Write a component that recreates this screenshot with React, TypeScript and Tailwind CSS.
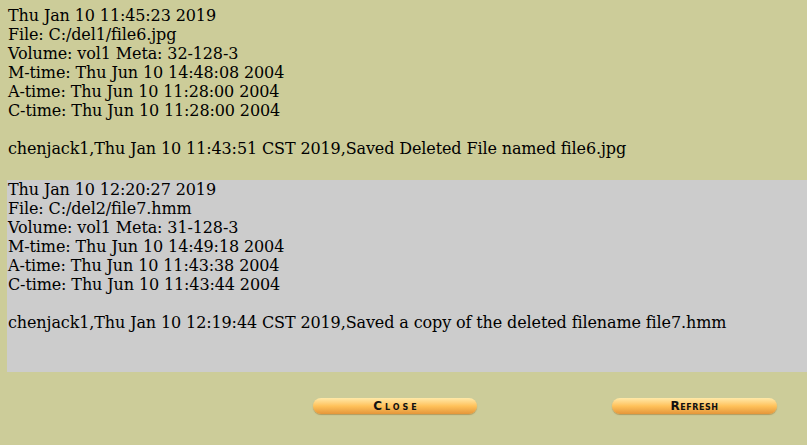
import React from 'react';

interface Entry {
  stamp: string;
  file: string;
  volume: string;
  mtime: string;
  atime: string;
  ctime: string;
  note: string;
}

const entries: Entry[] = [
  {
    stamp: 'Thu Jan 10 11:45:23 2019',
    file: 'C:/del1/file6.jpg',
    volume: 'vol1 Meta: 32-128-3',
    mtime: 'Thu Jun 10 14:48:08 2004',
    atime: 'Thu Jun 10 11:28:00 2004',
    ctime: 'Thu Jun 10 11:28:00 2004',
    note: 'chenjack1,Thu Jan 10 11:43:51 CST 2019,Saved Deleted File named file6.jpg',
  },
  {
    stamp: 'Thu Jan 10 12:20:27 2019',
    file: 'C:/del2/file7.hmm',
    volume: 'vol1 Meta: 31-128-3',
    mtime: 'Thu Jun 10 14:49:18 2004',
    atime: 'Thu Jun 10 11:43:38 2004',
    ctime: 'Thu Jun 10 11:43:44 2004',
    note: 'chenjack1,Thu Jan 10 12:19:44 CST 2019,Saved a copy of the deleted filename file7.hmm',
  },
];

const EntryBlock: React.FC<{ entry: Entry; shaded: boolean }> = ({ entry, shaded }) => (
  <div className={shaded ? 'bg-[#cccccc] h-[192px] pl-px' : 'h-[174px] pl-px'}>
    <div>{entry.stamp}</div>
    <div>File: {entry.file}</div>
    <div>Volume: {entry.volume}</div>
    <div>M-time: {entry.mtime}</div>
    <div>A-time: {entry.atime}</div>
    <div>C-time: {entry.ctime}</div>
    <div className="h-[19px]" />
    <div className="whitespace-nowrap">{entry.note}</div>
  </div>
);

const PillButton: React.FC<{ label: string; width: string; spacing: string }> = ({ label, width, spacing }) => (
  <button
    className={`${width} h-[16px] rounded-full bg-gradient-to-b from-[#ffe9a8] via-[#ffc25a] to-[#e4963a] shadow-[0_1px_1px_rgba(150,110,40,0.5)] flex items-center justify-center text-[#111] font-bold text-[12px] leading-none [font-variant:small-caps] [font-family:'DejaVu_Sans',sans-serif]`}
  >
    <span className={spacing}>{label}</span>
  </button>
);

export default function App() {
  return (
    <div className="w-[807px] h-[445px] overflow-hidden bg-[#cccc99] text-black text-[16px] leading-[19px] tracking-[-0.12px] [font-family:'DejaVu_Serif',serif]">
      <div className="pt-[6px] pl-[7px]">
        <EntryBlock entry={entries[0]} shaded={false} />
        <EntryBlock entry={entries[1]} shaded />
      </div>
      <div className="flex pt-[26px] pl-[313px] gap-[135px]">
        <PillButton label="Close" width="w-[164px]" spacing="tracking-[3px] pl-[3px]" />
        <PillButton label="Refresh" width="w-[165px]" spacing="tracking-[0.5px]" />
      </div>
    </div>
  );
}
